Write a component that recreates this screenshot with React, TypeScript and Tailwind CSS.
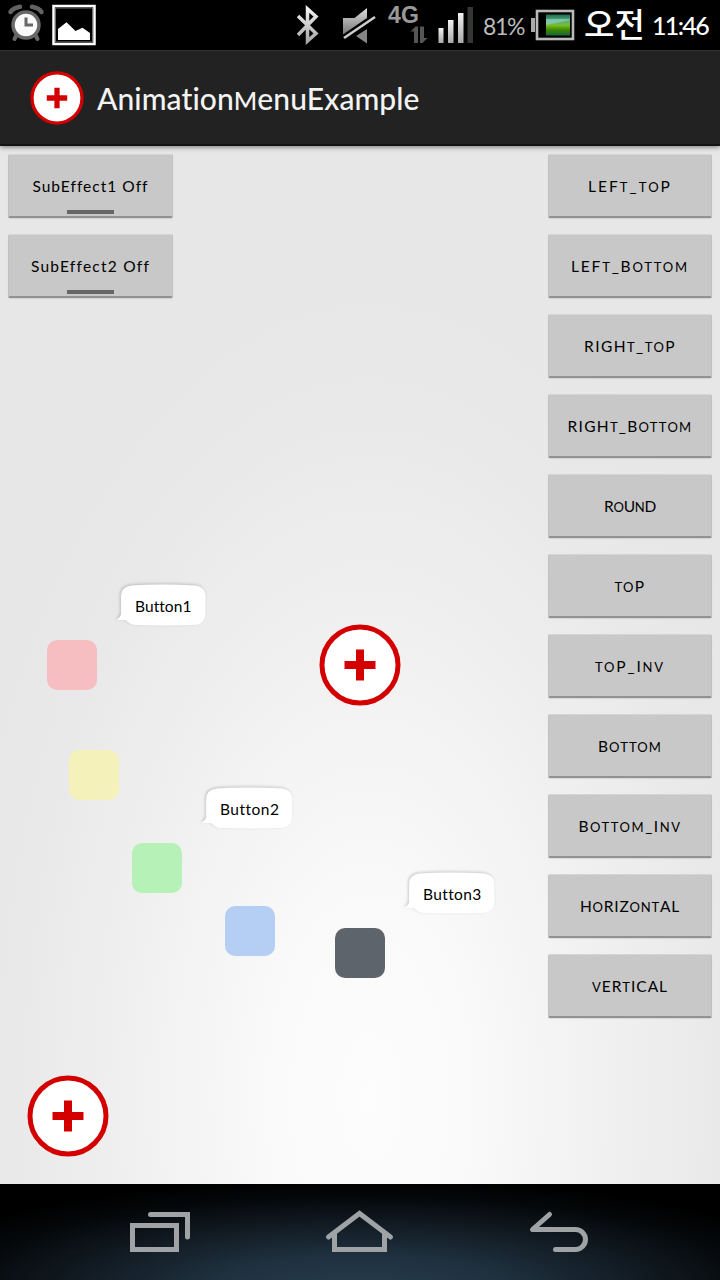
import { Fragment, useLayoutEffect, useRef, useState } from "react";

type LabelProps = { text: string; width: number; className?: string; smallLetters?: RegExp };

/** A single line of text whose tracking is adjusted to fill the given width. */
function Label({ text, width, className = "", smallLetters }: LabelProps) {
  const ref = useRef<HTMLSpanElement>(null);
  const [tracking, setTracking] = useState(0);
  useLayoutEffect(() => {
    if (!ref.current) return;
    const natural = ref.current.getBoundingClientRect().width;
    setTracking((width - natural) / text.length);
  }, [text, width]);
  return (
    <span
      ref={ref}
      className={`inline-block whitespace-nowrap ${className}`}
      style={{ letterSpacing: `${tracking}px` }}
    >
      {smallLetters
        ? text.split(smallLetters).map((part, i) =>
            i % 2 === 1 ? (
              <span key={i} className="text-[0.84em]">
                {part}
              </span>
            ) : (
              <Fragment key={i}>{part}</Fragment>
            ),
          )
        : text}
    </span>
  );
}

function PlusIcon({ className }: { className: string }) {
  return (
    <svg viewBox="0 0 82 82" className={className}>
      <circle cx="41" cy="41" r="38" fill="#fff" stroke="#d40000" strokeWidth="5" />
      <path d="M37 25.500h8v11.500h11.500v8H45v11.500h-8V45H25.500v-8H37z" fill="#d40000" />
    </svg>
  );
}

function StatusBar() {
  return (
    <div className="flex h-[50px] shrink-0 items-start bg-black">
      <svg width="720" height="50" viewBox="0 0 720 50" className="-mr-[720px] shrink-0">
        <defs>
          <linearGradient id="metal" x1="0" y1="0" x2="0" y2="1">
            <stop offset="0" stopColor="#f2f2f2" />
            <stop offset="1" stopColor="#a9a9a9" />
          </linearGradient>
          <linearGradient id="speaker" x1="0" y1="0" x2="0" y2="1">
            <stop offset="0" stopColor="#ddd" />
            <stop offset="1" stopColor="#777" />
          </linearGradient>
          <linearGradient id="charge" x1="0" y1="0" x2="0" y2="1">
            <stop offset="0" stopColor="#1c6c46" />
            <stop offset="0.3" stopColor="#5dae82" />
            <stop offset="0.52" stopColor="#78bc26" />
            <stop offset="0.75" stopColor="#398500" />
            <stop offset="1" stopColor="#16653b" />
          </linearGradient>
        </defs>
        <g strokeLinecap="round" fill="none">
          <path d="M10.500 12Q13 8 20 6.800M32 6.800Q39 8 41.500 12" stroke="#626262" strokeWidth="4.500" />
          <path d="M17 34l-2.500 5M35 34l2.500 5" stroke="#666" strokeWidth="4" />
          <circle cx="26" cy="25" r="13" fill="#fafafa" stroke="#686868" strokeWidth="3.500" />
          <path d="M26 17.500v7.500h7" stroke="#666" strokeWidth="3" strokeLinecap="butt" />
        </g>
        <rect x="53.500" y="6" width="41" height="38" fill="none" stroke="#fff" strokeWidth="2.500" />
        <rect x="55.500" y="8" width="37" height="34" fill="none" stroke="#6e6e6e" strokeWidth="1" />
        <path d="M58 40V29L66.500 22.300 75.500 31l7-3.200L90 33v7z" fill="#fff" />
        <path d="M298 16l18 17.500-8.500 7.500V9l8.500 7.500-18 18.500" fill="none" stroke="url(#metal)" strokeWidth="3.500" />
        <path d="M343 18h11.500L367 8v10L343 34.500z" fill="url(#speaker)" />
        <path d="M356 36L367 29v14.500z" fill="#858585" />
        <path d="M344 38L375 17" stroke="#ccc" strokeWidth="2.600" />
        <path d="M410.500 31.500L415.500 26.500H418V43H414V31.500zM420 26.500h4V38h3.500L422.500 43H420z" fill="#555" />
        <g fill="url(#metal)">
          <rect x="438.500" y="28" width="5" height="15" />
          <rect x="448" y="20" width="5.500" height="23" />
          <rect x="458" y="13" width="5.500" height="30" />
        </g>
        <rect x="467.500" y="7" width="5.500" height="36" fill="#353735" />
        <rect x="531" y="18" width="4" height="14" fill="#aaa" />
        <rect x="537" y="11" width="36" height="28" fill="#000" stroke="#bababa" strokeWidth="2.600" />
        <rect x="546" y="14.500" width="24" height="21" fill="url(#charge)" />
        <path d="M546 19h24v1l-24 5z" fill="#8bd1c6" opacity="0.7" />
      </svg>
      <div className="relative flex w-full items-start whitespace-nowrap font-['Lato','Noto_Sans_CJK_KR',sans-serif] leading-[50px]">
        <Label text="4G" width={31} className="ml-[388px] font-['Liberation_Sans',sans-serif] text-[23px] font-bold leading-[30px] text-[#999]" />
        <Label text="81%" width={41} className="ml-[64px] text-[23px] leading-[53px] text-[#bbb]" />
        <Label text="오전" width={61} className="ml-[60px] font-['Noto_Sans_CJK_KR',sans-serif] text-[33px] font-medium leading-[47px] text-white" />
        <Label text="11:46" width={56} className="ml-[7px] text-[25px] font-medium text-white" />
      </div>
    </div>
  );
}

const modes = [
  { text: "LEFT_TOP", width: 84 },
  { text: "LEFT_BOTTOM", width: 118 },
  { text: "RIGHT_TOP", width: 92 },
  { text: "RIGHT_BOTTOM", width: 125 },
  { text: "ROUND", width: 52 },
  { text: "TOP", width: 31 },
  { text: "TOP_INV", width: 70 },
  { text: "BOTTOM", width: 64 },
  { text: "BOTTOM_INV", width: 103 },
  { text: "HORIZONTAL", width: 100 },
  { text: "VERTICAL", width: 76 },
];

const buttonClass =
  "flex h-[64px] w-full items-center justify-center rounded-[2px] border-x border-t border-b-2 border-x-[#c2c2c2] border-t-[#d4d4d4] border-b-[#929292] bg-[#c8c8c8] pt-px text-[15.5px] leading-5 text-black shadow-[0_1px_1px_#00000018]";

function Toggle({ text, width }: { text: string; width: number }) {
  return (
    <button className={`${buttonClass} relative`}>
      <Label text={text} width={width} />
      <span className="absolute bottom-[2px] left-[58px] h-1 w-[47px] bg-[#666]" />
    </button>
  );
}

function Bubble({ text, width, className }: { text: string; width: number; className: string }) {
  return (
    <div className={`absolute h-[48px] ${className}`}>
      <svg
        viewBox="0 0 96 48"
        preserveAspectRatio="none"
        className="absolute inset-0 h-full w-full drop-shadow-[-0.5px_-0.5px_1.5px_#00000030]"
      >
        <path
          d="M16 4.500Q46 2.500 80 4.500Q89 6 89.500 14V33Q89 42 81 43.800Q50 45 18 43.800Q14 43 10.500 39H2Q5 36 6 33.500V15Q6 6 16 4.500Z"
          fill="#fff"
        />
      </svg>
      <Label text={text} width={width} className="relative ml-5 mt-[15px] text-[15.5px] leading-5 text-black" />
    </div>
  );
}

export default function App() {
  return (
    <div className="flex h-[1280px] w-[720px] flex-col overflow-hidden bg-black font-['Lato','Noto_Sans_CJK_KR',sans-serif]">
      <StatusBar />
      <header className="z-10 flex h-24 shrink-0 items-center border-b-2 border-t border-b-[#141414] border-t-[#343434] bg-[#222] pl-[30px] shadow-[0_1px_5px_#00000080]">
        <PlusIcon className="h-[54px] w-[54px]" />
        <h1 className="ml-[13px] pt-0.5">
          <Label text="AnimationMenuExample" width={323} smallLetters={/(M)/} className="text-[30px] font-medium leading-10 text-[#f3f3f3]" />
        </h1>
      </header>
      <main className="relative flex h-[1038px] shrink-0 items-start justify-between bg-[radial-gradient(ellipse_440px_850px_at_370px_950px,#fdfdfd_0%,#f9f9f9_25%,#f0f0f0_55%,#e9e9e9_80%,#e7e7e7_100%)] p-2">
        <div className="flex w-[165px] flex-col gap-4">
          <Toggle text="SubEffect1 Off" width={115} />
          <Toggle text="SubEffect2 Off" width={118} />
        </div>
        <div className="flex w-[164px] flex-col gap-4">
          {modes.map((mode) => (
            <button key={mode.text} className={buttonClass}>
              <Label text={mode.text} width={mode.width} smallLetters={/([TOMVN]+)/} />
            </button>
          ))}
        </div>
        <div className="absolute left-[47px] top-[494px] h-[50px] w-[50px] rounded-[10px] bg-[#f6bec0]" />
        <div className="absolute left-[69px] top-[604px] h-[50px] w-[50px] rounded-[10px] bg-[#f4f1ba]" />
        <div className="absolute left-[132px] top-[697px] h-[50px] w-[50px] rounded-[10px] bg-[#b6f1b8]" />
        <div className="absolute left-[225px] top-[760px] h-[50px] w-[50px] rounded-[10px] bg-[#b5cef3]" />
        <div className="absolute left-[335px] top-[782px] h-[50px] w-[50px] rounded-[10px] bg-[#5d646b]" />
        <Bubble text="Button1" width={56} className="left-[115px] top-[435px] w-[97px]" />
        <Bubble text="Button2" width={59} className="left-[200px] top-[638px] w-[99px]" />
        <Bubble text="Button3" width={58} className="left-[403px] top-[723px] w-[98px]" />
        <PlusIcon className="absolute left-[319px] top-[478px] h-[82px] w-[82px]" />
        <PlusIcon className="absolute left-[27px] top-[929px] h-[82px] w-[82px]" />
      </main>
      <nav className="flex h-24 shrink-0 items-start bg-[radial-gradient(ellipse_480px_110px_at_360px_105px,#263b4c_0%,#1f313f_30%,#111a22_60%,#040709_85%,#000_100%)]">
        <svg viewBox="0 0 720 96" className="h-24 w-full" fill="none" stroke="#a0a3a5" strokeWidth="5">
          <path d="M132.500 41.500h44v24h-44z" />
          <path d="M150.500 30.500h37V53" strokeLinecap="round" />
          <path d="M328.500 53L359.500 29.500 390.500 53" strokeLinecap="round" />
          <path d="M334.500 49v16.500h50V49" />
          <path d="M549.500 30.500L532.500 45.500H575.500a10 10 0 0 1 0 20H555.500" strokeLinecap="round" strokeLinejoin="round" />
        </svg>
      </nav>
    </div>
  );
}
